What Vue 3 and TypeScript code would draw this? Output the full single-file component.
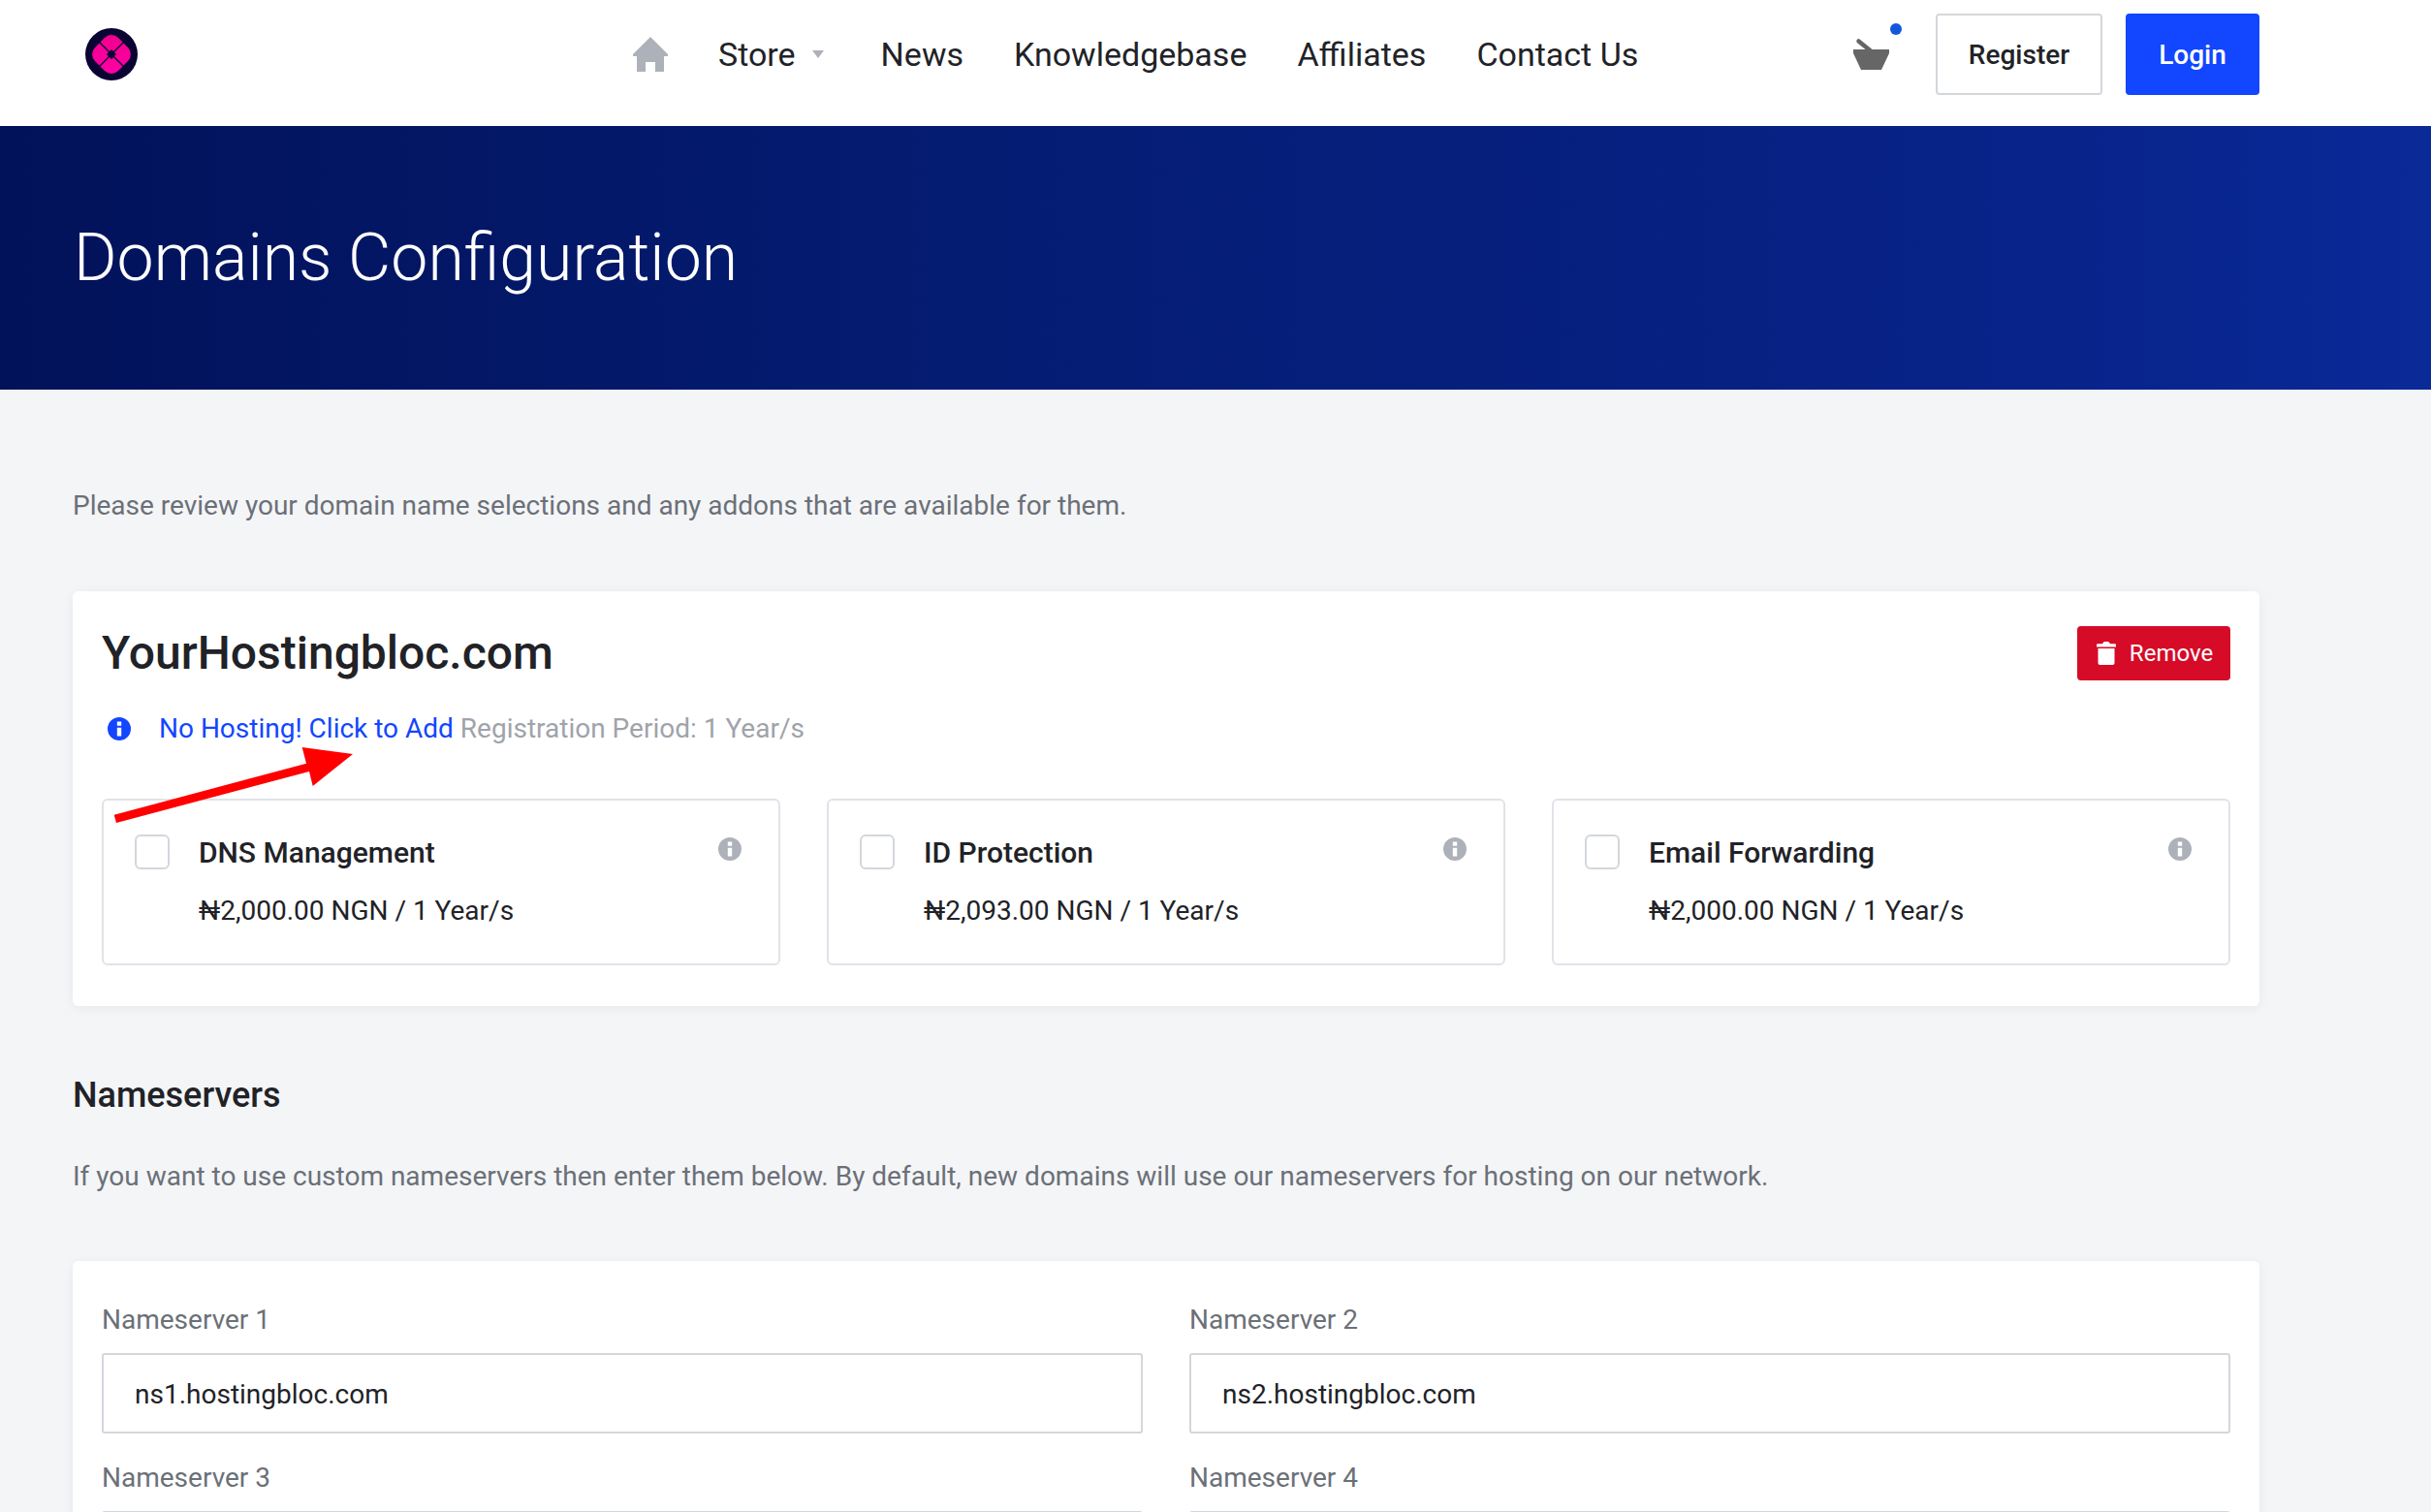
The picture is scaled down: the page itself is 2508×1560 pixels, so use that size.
<script setup lang="ts">
const navItems = ["News", "Knowledgebase", "Affiliates", "Contact Us"];

const addons = [
  { name: "DNS Management", price: "₦2,000.00 NGN / 1 Year/s" },
  { name: "ID Protection", price: "₦2,093.00 NGN / 1 Year/s" },
  { name: "Email Forwarding", price: "₦2,000.00 NGN / 1 Year/s" },
];

const nameservers = [
  { label: "Nameserver 1", value: "ns1.hostingbloc.com" },
  { label: "Nameserver 2", value: "ns2.hostingbloc.com" },
  { label: "Nameserver 3", value: "" },
  { label: "Nameserver 4", value: "" },
];
</script>

<template>
  <div class="page">
    <header class="topbar">
      <svg class="logo" viewBox="0 0 54 54">
        <defs>
          <linearGradient id="petal" x1="0" y1="0" x2="1" y2="1">
            <stop offset="0" stop-color="#f0008c" />
            <stop offset="1" stop-color="#ff00a8" />
          </linearGradient>
        </defs>
        <circle cx="27" cy="27" r="27" fill="#0a0433" />
        <g transform="rotate(45 27 27)">
          <rect x="10" y="10" width="34" height="34" rx="10" fill="url(#petal)" />
          <path d="M27 9V45M9 27H45" stroke="#0a0433" stroke-width="1.400" />
        </g>
        <path d="M27 22 32 27 27 32 22 27Z" fill="#0a0433" />
      </svg>

      <nav class="nav">
        <svg class="home" viewBox="0 0 36 36">
          <path d="M18 0 36 18V20H32V36H23V26H13V36H4V20H0V18Z" />
        </svg>
        <span class="nav-link store">
          Store
          <i class="caret"></i>
        </span>
        <span v-for="item in navItems" :key="item" class="nav-link">{{ item }}</span>
      </nav>

      <div class="actions">
        <div class="cart">
          <svg class="basket" viewBox="0 0 37 32">
            <path d="M0 11H37V15L29 32H8L0 15Z" />
            <path d="M5.500 2.500 21 15" stroke="#666" stroke-width="4.500" stroke-linecap="round" />
          </svg>
          <i class="cart-dot"></i>
        </div>
        <button class="btn btn-outline">Register</button>
        <button class="btn btn-primary">Login</button>
      </div>
    </header>

    <section class="hero">
      <h1>Domains Configuration</h1>
    </section>

    <main class="content">
      <p class="intro">Please review your domain name selections and any addons that are available for them.</p>

      <section class="card domain-card">
        <div class="domain-head">
          <h2>YourHostingbloc.com</h2>
          <button class="btn-remove">
            <svg class="trash" viewBox="0 0 20 24">
              <path d="M0 3.500C0 2.700.5 2.300 1.200 2.300H6L7 .7C7.300.2 7.700 0 8.200 0H11.800C12.300 0 12.700.2 13 .7L14 2.300H18.800C19.500 2.300 20 2.700 20 3.500V5.500H0ZM1.500 7H18.500V22C18.500 23.200 17.700 24 16.500 24H3.500C2.300 24 1.500 23.200 1.500 22Z" />
            </svg>
            Remove
          </button>
        </div>

        <div class="domain-meta">
          <svg class="info info-blue" viewBox="0 0 24 24">
            <path fill-rule="evenodd" d="M12 0a12 12 0 1 0 0 24 12 12 0 0 0 0-24ZM9.800 4.500h4.400v4.200H9.800Zm0 6.300h4.400v8.700H9.800Z" />
          </svg>
          <span class="meta-text"><a class="hosting-link">No Hosting! Click to Add</a> <span class="period">Registration Period: 1 Year/s</span></span>
        </div>

        <div class="addons">
          <div v-for="addon in addons" :key="addon.name" class="addon">
            <i class="check"></i>
            <div class="addon-body">
              <div class="addon-name">{{ addon.name }}</div>
              <div class="addon-price">{{ addon.price }}</div>
            </div>
            <svg class="info info-grey" viewBox="0 0 24 24">
              <path fill-rule="evenodd" d="M12 0a12 12 0 1 0 0 24 12 12 0 0 0 0-24ZM9.800 4.500h4.400v4.200H9.800Zm0 6.300h4.400v8.700H9.800Z" />
            </svg>
          </div>
        </div>

        <svg class="arrow" viewBox="0 0 260 84">
          <path d="M4.700 70.700 203 17.700 198.700 1 251 8 209.700 41 206 26 7 79Z" />
        </svg>
      </section>

      <h3 class="section-title">Nameservers</h3>
      <p class="section-text">If you want to use custom nameservers then enter them below. By default, new domains will use our nameservers for hosting on our network.</p>

      <section class="card ns-card">
        <label v-for="ns in nameservers" :key="ns.label" class="field">
          <span class="field-label">{{ ns.label }}</span>
          <input class="field-input" type="text" :value="ns.value" />
        </label>
      </section>
    </main>
  </div>
</template>

<style>
html,
body {
  margin: 0;
  background: #f4f5f7;
}
</style>

<style scoped>
.page {
  width: 2508px;
  height: 1560px;
  overflow: hidden;
  background: #f4f5f7;
  font-family: Roboto, "Noto Sans", sans-serif;
  color: #212227;
}

.topbar {
  height: 130px;
  box-sizing: border-box;
  display: flex;
  align-items: center;
  padding: 0 177px 18px 88px;
  background: #fff;
}

.logo {
  width: 54px;
  height: 54px;
  flex: none;
}

.nav {
  display: flex;
  align-items: center;
  margin-left: 511px;
  gap: 52px;
}

.home {
  width: 36px;
  height: 36px;
  fill: #adb1ba;
}

.nav-link {
  font-size: 34px;
  line-height: 40px;
}

.store {
  display: flex;
  align-items: center;
  gap: 17px;
  margin-right: 7px;
}

.caret {
  width: 0;
  height: 0;
  border-left: 6.500px solid transparent;
  border-right: 6.500px solid transparent;
  border-top: 8px solid #adb1ba;
}

.actions {
  display: flex;
  align-items: center;
  margin-left: auto;
}

.cart {
  position: relative;
  width: 37px;
  height: 32px;
  margin-right: 48px;
}

.basket {
  display: block;
  width: 37px;
  height: 32px;
  overflow: visible;
  fill: #666;
}

.cart-dot {
  position: absolute;
  left: 38px;
  top: -16px;
  width: 12px;
  height: 12px;
  border-radius: 50%;
  background: #1158dc;
}

.btn {
  height: 84px;
  box-sizing: border-box;
  border-radius: 4px;
  font: 500 28px Roboto, sans-serif;
}

.btn-outline {
  width: 172px;
  margin-right: 24px;
  border: 2px solid #d3d7dc;
  background: #fff;
  color: #212227;
}

.btn-primary {
  width: 138px;
  border: 0;
  background: #1246ff;
  color: #fff;
}

.hero {
  height: 272px;
  box-sizing: border-box;
  padding-left: 76px;
  display: flex;
  align-items: center;
  background: linear-gradient(90deg, #02125a 0%, #041c72 40%, #08238a 85%, #0a2a98 100%);
}

.hero h1 {
  margin: 0;
  font-size: 68px;
  line-height: 86px;
  font-weight: 300;
  color: #fff;
}

.content {
  padding: 0 177px 0 75px;
}

.intro {
  margin: 0;
  padding-top: 100px;
  font-size: 28px;
  line-height: 40px;
  color: #6b7078;
}

.card {
  background: #fff;
  border-radius: 6px;
  box-shadow: 0 2px 12px rgba(20, 30, 60, 0.06);
}

.domain-card {
  position: relative;
  height: 428px;
  box-sizing: border-box;
  margin-top: 68px;
  padding: 36px 30px 0;
}

.domain-head {
  display: flex;
  align-items: center;
  justify-content: space-between;
}

.domain-head h2 {
  margin: 0;
  font-size: 48px;
  line-height: 56px;
  font-weight: 500;
  color: #212227;
}

.btn-remove {
  width: 158px;
  height: 56px;
  display: flex;
  align-items: center;
  justify-content: center;
  gap: 14px;
  padding: 0 0 0 2px;
  border: 0;
  border-radius: 4px;
  background: #d60b28;
  color: #fff;
  font: 400 24px Roboto, sans-serif;
}

.trash {
  width: 20px;
  height: 24px;
  fill: #fff;
}

.domain-meta {
  display: flex;
  align-items: center;
  margin-top: 30px;
  padding-left: 6px;
}

.info {
  width: 24px;
  height: 24px;
  flex: none;
}

.info-blue {
  fill: #1246ff;
}

.info-grey {
  fill: #adb1ba;
  margin-top: 20px;
}

.meta-text {
  margin-left: 29px;
  font-size: 28px;
  line-height: 40px;
}

.hosting-link {
  color: #1246ff;
}

.period {
  color: #9fa3ab;
}

.addons {
  display: grid;
  grid-template-columns: repeat(3, 700px);
  gap: 48px;
  margin-top: 52px;
}

.addon {
  height: 172px;
  box-sizing: border-box;
  display: flex;
  align-items: flex-start;
  padding: 18px 38px 0 32px;
  border: 2px solid #e0e3e9;
  border-radius: 6px;
}

.check {
  flex: none;
  width: 36px;
  height: 36px;
  margin-top: 17px;
  box-sizing: border-box;
  border: 2px solid #d3d7dc;
  border-radius: 6px;
  background: #fff;
}

.addon-body {
  flex: 1;
  margin-left: 30px;
}

.addon-name {
  margin-top: 16px;
  font-size: 30px;
  line-height: 40px;
  font-weight: 500;
  color: #212227;
}

.addon-price {
  margin-top: 20px;
  font-size: 28px;
  line-height: 40px;
  color: #212227;
}

.arrow {
  position: absolute;
  left: 38px;
  top: 160px;
  width: 260px;
  height: 84px;
  fill: #fe0000;
}

.section-title {
  margin: 66px 0 0;
  font-size: 36px;
  line-height: 52px;
  font-weight: 500;
  color: #212227;
}

.section-text {
  margin: 38px 0 0;
  font-size: 28px;
  line-height: 40px;
  color: #6b7078;
}

.ns-card {
  display: grid;
  grid-template-columns: repeat(2, 1074px);
  column-gap: 48px;
  row-gap: 26px;
  margin-top: 67px;
  padding: 41px 30px;
}

.field {
  display: flex;
  flex-direction: column;
}

.field-label {
  font-size: 28px;
  line-height: 40px;
  color: #6b7078;
}

.field-input {
  height: 83px;
  margin-top: 14px;
  box-sizing: border-box;
  padding: 2px 32px 0;
  border: 2px solid #d3d7dc;
  border-radius: 3px;
  font: 400 28px Roboto, sans-serif;
  color: #212227;
  background: #fff;
}
</style>
